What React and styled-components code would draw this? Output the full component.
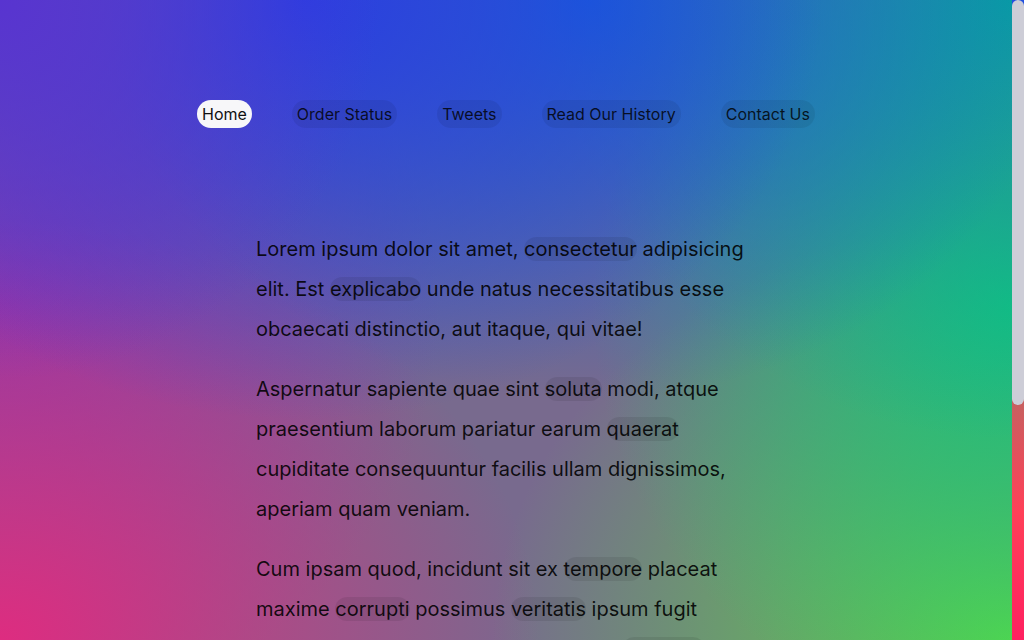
import React from 'react';
import styled, { createGlobalStyle } from 'styled-components';

const GlobalStyle = createGlobalStyle`
  html, body {
    margin: 0;
    height: 100%;
  }
  body {
    font-family: Inter, "Noto Sans", sans-serif;
    color: rgba(0, 0, 0, 0.88);
    overflow: hidden;
  }
  #root {
    height: 100%;
  }
`;

const links = ['Home', 'Order Status', 'Tweets', 'Read Our History', 'Contact Us'];

const App = () => {
  return (
    <>
      <GlobalStyle />
      <Shell>
        <Scroller>
          <Nav>
            {links.map((label, i) => (
              <NavLink key={label} href="#" $active={i === 0}>
                {label}
              </NavLink>
            ))}
          </Nav>
          <Main>
            <Paragraph>
              Lorem ipsum dolor sit amet, <Mark>consectetur</Mark> adipisicing elit. Est{' '}
              <Mark>explicabo</Mark> unde natus necessitatibus esse obcaecati distinctio, aut
              itaque, qui vitae!
            </Paragraph>
            <Paragraph>
              Aspernatur sapiente quae sint <Mark>soluta</Mark> modi, atque praesentium laborum
              pariatur earum <Mark>quaerat</Mark> cupiditate consequuntur facilis ullam
              dignissimos, aperiam quam veniam.
            </Paragraph>
            <Paragraph>
              Cum ipsam quod, incidunt sit ex <Mark>tempore</Mark> placeat maxime{' '}
              <Mark>corrupti</Mark> possimus <Mark>veritatis</Mark> ipsum fugit voluptatum
              laudantium aliquam dolore <Mark>similique</Mark> ea, nemo quis officiis dolores
              eveniet.
            </Paragraph>
            <Paragraph>
              Quibusdam <Mark>voluptas</Mark> ratione, error nobis sequi iusto minima molestiae
              odit animi <Mark>repellendus</Mark> deserunt magnam, illo ut earum harum vel
              nesciunt tenetur.
            </Paragraph>
          </Main>
        </Scroller>
        <ScrollRail>
          <ScrollThumb />
        </ScrollRail>
      </Shell>
    </>
  );
};

export default App;

const Shell = styled.div`
  display: flex;
  height: 100%;
`;

const Scroller = styled.div`
  flex: 1;
  overflow-y: auto;
  padding: 100px 0;
  background-color: #786a8e;
  background-image:
    radial-gradient(ellipse 380px 380px at 0% 0%, rgba(88, 52, 208, 1), rgba(88, 52, 208, 0)),
    radial-gradient(ellipse 520px 420px at 30% 0%, rgba(40, 62, 226, 1), rgba(40, 62, 226, 0)),
    radial-gradient(ellipse 480px 400px at 58% 0%, rgba(18, 100, 214, 1), rgba(18, 100, 214, 0)),
    radial-gradient(ellipse 460px 440px at 100% 0%, rgba(8, 160, 160, 1), rgba(8, 160, 160, 0)),
    radial-gradient(ellipse 420px 420px at 100% 48%, rgba(22, 198, 122, 1), rgba(22, 198, 122, 0)),
    radial-gradient(ellipse 520px 420px at 100% 100%, rgba(90, 216, 72, 1), rgba(90, 216, 72, 0)),
    radial-gradient(ellipse 540px 420px at 0% 100%, rgba(222, 44, 128, 1), rgba(222, 44, 128, 0)),
    radial-gradient(ellipse 440px 420px at 0% 48%, rgba(140, 56, 170, 1), rgba(140, 56, 170, 0));
`;

const ScrollRail = styled.div`
  width: 12px;
  flex-shrink: 0;
  background: linear-gradient(#2050e0 0%, #8a5a90 40%, #c86060 63%, #ff4058 80%, #ff2060 100%);
`;

const ScrollThumb = styled.div`
  height: 405px;
  border-radius: 6px;
  background: #cdcdd7;
`;

const Nav = styled.nav`
  display: flex;
  justify-content: center;
  gap: 40px;
`;

const NavLink = styled.a`
  display: block;
  padding: 4px 5px;
  font-size: 16px;
  line-height: 20px;
  border-radius: 14px;
  text-decoration: none;
  color: ${({ $active }) => ($active ? '#111' : 'rgba(0, 0, 0, 0.82)')};
  background-color: ${({ $active }) => ($active ? '#f7f7f9' : 'rgba(0, 0, 0, 0.07)')};
`;

const Main = styled.main`
  max-width: 500px;
  margin: 101px auto 0;
`;

const Paragraph = styled.p`
  margin: 0 0 20px;
  font-size: 20px;
  line-height: 40px;
`;

const Mark = styled.span`
  background-color: rgba(0, 0, 0, 0.08);
  border-radius: 12px;
`;
